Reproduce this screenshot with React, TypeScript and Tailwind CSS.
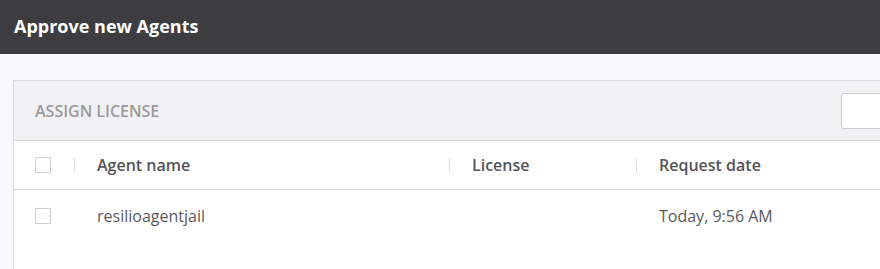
import React from "react";

const cols = [
  { label: "Agent name", width: "w-[375px]" },
  { label: "License", width: "w-[187px]" },
  { label: "Request date", width: "w-[240px]" },
];

function Checkbox() {
  return <div className="w-4 h-4 border border-[#cfcfcf] bg-white rounded-[1px]" />;
}

export default function App() {
  return (
    <div className="w-[880px] h-[269px] overflow-hidden bg-[#f8f8fa] font-['Open_Sans',sans-serif]">
      {/* Top bar */}
      <div className="h-[54px] bg-[#3d3d3f] flex items-center px-[14px]">
        <h1 className="text-white text-[18px] font-bold leading-none -mt-[3px]">Approve new Agents</h1>
      </div>

      <div className="pt-[26px] pl-[13px]">
        <div className="w-[900px] border border-[#dcdcde] bg-white">
          {/* Panel header */}
          <div className="h-[60px] bg-[#f1f1f3] border-b border-[#dcdcde] flex items-center justify-between pl-[21px]">
            <span className="text-[16px] font-semibold text-[#999a9c] uppercase">Assign license</span>
            <div className="w-[80px] h-[36px] bg-white border border-[#cccccc] rounded-[3px] mr-[-9px]" />
          </div>

          {/* Table header */}
          <div className="h-[49px] border-b border-[#dcdcde] flex items-center pl-[21px]">
            <div className="w-[39px] flex items-center">
              <Checkbox />
            </div>
            {cols.map((c) => (
              <div key={c.label} className={`${c.width} flex items-center`}>
                <div className="w-px h-[14px] bg-[#dedede]" />
                <span className="ml-[22px] text-[16px] font-semibold text-[#555558]">{c.label}</span>
              </div>
            ))}
          </div>

          {/* Row */}
          <div className="h-[50px] flex items-center pl-[21px] pt-[1px]">
            <div className="w-[62px] flex items-center">
              <Checkbox />
            </div>
            <div className="w-[375px] text-[16px] text-[#59595c]">resilioagentjail</div>
            <div className="w-[187px]" />
            <div className="text-[16px] text-[#59595c]">Today, 9:56 AM</div>
          </div>
          <div className="h-[40px]" />
        </div>
      </div>
    </div>
  );
}
